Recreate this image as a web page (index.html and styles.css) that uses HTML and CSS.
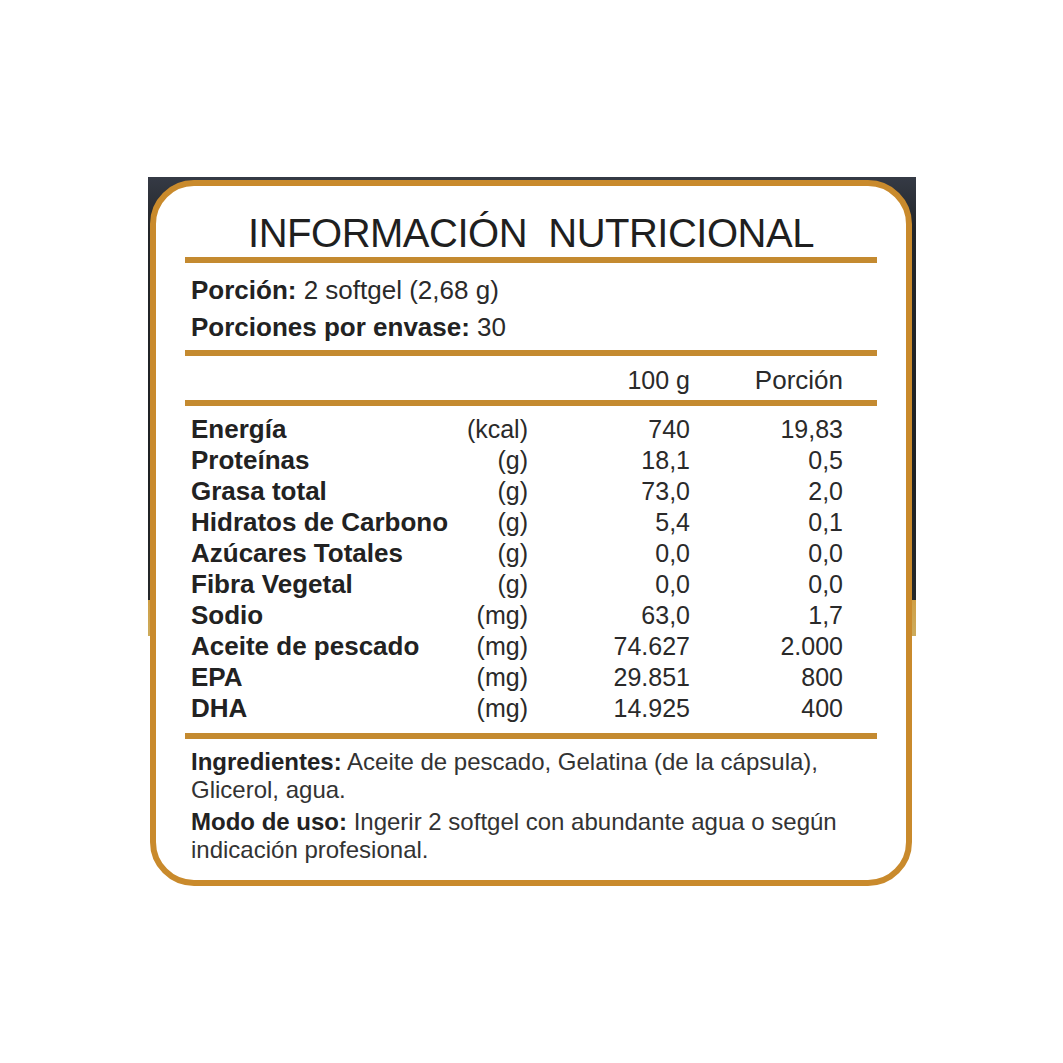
FILE: index.html
```html
<!DOCTYPE html>
<html lang="es">
<head>
<meta charset="utf-8">
<title>Información Nutricional</title>
<link rel="stylesheet" href="styles.css">
</head>
<body>
<div class="stage">
  <div class="card">
    <h1 class="title">INFORMACIÓN&nbsp; NUTRICIONAL</h1>
    <div class="rule"></div>
    <div class="serving">
      <p><b>Porción:</b> 2 softgel (2,68 g)</p>
      <p><b>Porciones por envase:</b> 30</p>
    </div>
    <div class="rule rule-b"></div>
    <div class="grid head">
      <span></span><span></span><span class="num">100 g</span><span class="num">Porción</span>
    </div>
    <div class="rule rule-c"></div>
    <div class="grid rows">
      <b>Energía</b><span class="unit">(kcal)</span><span class="num">740</span><span class="num">19,83</span>
      <b>Proteínas</b><span class="unit">(g)</span><span class="num">18,1</span><span class="num">0,5</span>
      <b>Grasa total</b><span class="unit">(g)</span><span class="num">73,0</span><span class="num">2,0</span>
      <b>Hidratos de Carbono</b><span class="unit">(g)</span><span class="num">5,4</span><span class="num">0,1</span>
      <b>Azúcares Totales</b><span class="unit">(g)</span><span class="num">0,0</span><span class="num">0,0</span>
      <b>Fibra Vegetal</b><span class="unit">(g)</span><span class="num">0,0</span><span class="num">0,0</span>
      <b>Sodio</b><span class="unit">(mg)</span><span class="num">63,0</span><span class="num">1,7</span>
      <b>Aceite de pescado</b><span class="unit">(mg)</span><span class="num">74.627</span><span class="num">2.000</span>
      <b>EPA</b><span class="unit">(mg)</span><span class="num">29.851</span><span class="num">800</span>
      <b>DHA</b><span class="unit">(mg)</span><span class="num">14.925</span><span class="num">400</span>
    </div>
    <div class="rule rule-d"></div>
    <div class="notes">
      <p><b>Ingredientes:</b> Aceite de pescado, Gelatina (de la cápsula),<br>Glicerol, agua.</p>
      <p><b>Modo de uso:</b> Ingerir 2 softgel con abundante agua o según<br>indicación profesional.</p>
    </div>
  </div>
</div>
</body>
</html>
```

FILE: styles.css
```css
html, body {
  margin: 0;
  padding: 0;
  background: #ffffff;
}

body {
  font-family: "Liberation Sans", Arial, sans-serif;
  color: #2a2a2a;
}

.stage {
  margin: 177px 0 0 148px;
  width: 768px;
  padding-top: 3px;
  background:
    linear-gradient(to bottom,
      #353a45 0px,
      #23262a 50px,
      #1e2124 300px,
      #25282a 423px,
      #cf9f45 423px,
      #cdab5c 459px,
      transparent 459px);
}

.card {
  box-sizing: border-box;
  margin-left: 2px;
  width: 762px;
  border: 6px solid #c98a2c;
  border-radius: 44px;
  background: #ffffff;
  padding: 23px 29px 16px 29px;
}

.title {
  margin: 0;
  font-weight: normal;
  font-size: 40px;
  line-height: 48px;
  letter-spacing: -0.5px;
  text-align: center;
  color: #1f1f1f;
}

.rule {
  height: 6px;
  background: #c48a30;
}

.rule-b { margin-top: 8px; }
.rule-c { margin-top: 4px; }
.rule-d { margin-top: 9px; }

.serving {
  margin-top: 12px;
  padding-left: 6px;
  font-size: 26px;
  line-height: 30px;
}

.serving p,
.notes p {
  margin: 0;
}

.serving p + p {
  margin-top: 7px;
}

.notes p + p {
  margin-top: 4px;
}

b {
  font-weight: bold;
  color: #222222;
}

.grid {
  display: grid;
  grid-template-columns: 255px 82px 162px 153px;
  padding-left: 6px;
  font-size: 25px;
  line-height: 31px;
}

.grid b {
  font-size: 26px;
  white-space: nowrap;
}

.head {
  margin-top: 9px;
}

.head .num:last-child {
  font-size: 26px;
}

.rows {
  margin-top: 8px;
}

.unit,
.num {
  text-align: right;
  white-space: nowrap;
}

.notes {
  margin-top: 9px;
  padding-left: 6px;
  font-size: 24px;
  line-height: 28px;
  color: #333333;
}
```
